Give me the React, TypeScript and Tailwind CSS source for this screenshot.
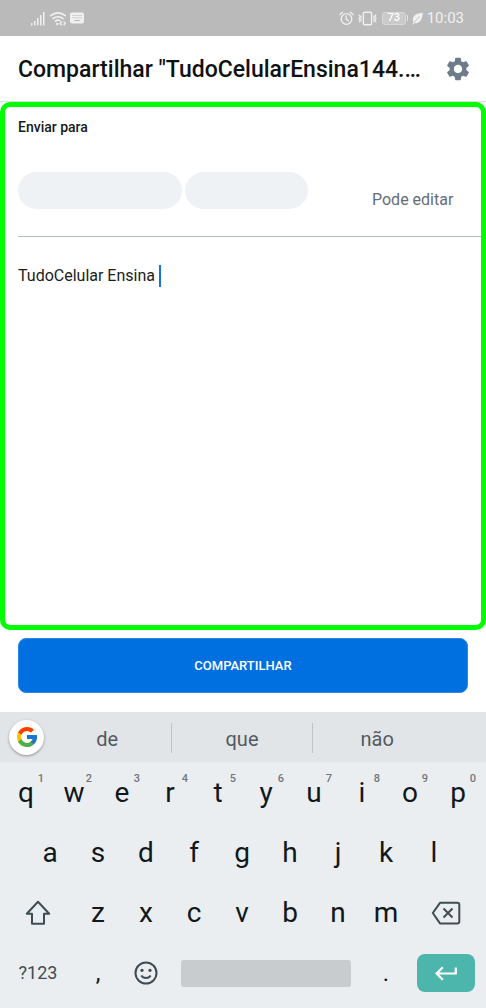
import type { ReactNode } from "react";
import { FcGoogle } from "react-icons/fc";
import { MdSettings } from "react-icons/md";

interface KeyProps {
  label: string;
  hint?: string;
  className?: string;
}

const Key = ({ label, hint, className = "text-[28px]" }: KeyProps) => {
  return (
    <button type="button" className={`relative col-span-2 leading-8 text-[#11181c] ${className}`}>
      {label}
      {hint && (
        <span className="absolute right-1.5 top-2 text-[11px] leading-4 font-medium text-[#70767a]">{hint}</span>
      )}
    </button>
  );
};

interface IconKeyProps {
  label: string;
  className: string;
  children: ReactNode;
}

const IconKey = ({ label, className, children }: IconKeyProps) => {
  return (
    <button type="button" aria-label={label} className={`flex items-center justify-center ${className}`}>
      {children}
    </button>
  );
};

const StatusBar = () => {
  return (
    <div className="flex h-9 items-center justify-between bg-[#bababa] pl-[30px] pr-[22px] text-[#f0f0f0]">
      <div className="flex items-center gap-1">
        <svg width="16" height="15" viewBox="0 0 16 15" fill="currentColor">
          <rect x="1" y="12" width="1.5" height="2.5" />
          <rect x="4" y="10" width="1.5" height="4.5" />
          <rect x="7" y="7" width="1.5" height="7.5" />
          <rect x="10" y="4" width="1.5" height="10.5" />
          <rect x="13" y="1" width="1.5" height="13.5" />
        </svg>
        <svg width="16" height="15" viewBox="0 0 16 15" fill="none" stroke="currentColor" strokeWidth="1.6" strokeLinecap="round">
          <path d="M.8 4.7a10.5 10.5 0 0 1 14.4 0M3 7.7a7.2 7.2 0 0 1 10 0M5.5 10.2a3.8 3.8 0 0 1 4.4-.6" />
          <circle cx="7.3" cy="13" r="1.2" fill="currentColor" stroke="none" />
          <path d="m11.4 11-1.2 1.4 1.2 1.4M14 11l1.2 1.4-1.2 1.4" strokeWidth="1.4" />
        </svg>
        <svg width="14" height="12" viewBox="0 0 14 12">
          <rect width="14" height="11" y=".5" rx="2" fill="currentColor" />
          <path d="M2.5 3.5h9M2.5 5.8h9" stroke="#b0b0b0" strokeWidth="1" strokeDasharray="1 1" />
          <path d="M4.5 8.5h5" stroke="#b0b0b0" strokeWidth="1" />
        </svg>
      </div>
      <div className="flex items-center gap-1">
        <svg width="15" height="15" viewBox="0 0 15 15" fill="none" stroke="currentColor" strokeWidth="1.3" strokeLinecap="round">
          <circle cx="7.5" cy="8" r="5.3" />
          <path d="M7.2 5v3.2l2.3 1.6M.9 3.6 3.6 1.2M14.1 3.6l-2.7-2.4" />
        </svg>
        <svg width="19" height="15" viewBox="0 0 19 15" fill="none" stroke="currentColor" strokeWidth="1.4">
          <rect x="5.4" y="1.2" width="8.2" height="12.6" rx="1.2" />
          <path d="m.9 3.5 1.2 2-1.2 2 1.2 2-1.2 2M3 4.5v6M18.1 3.5l-1.2 2 1.2 2-1.2 2 1.2 2M16 4.5v6" strokeWidth="1.1" />
        </svg>
        <div className="flex items-center gap-px pl-px">
          <span className="flex h-[13px] w-6 items-center justify-center rounded-[3px] border border-[#d8d8d8] bg-[#cacaca] text-[11px] leading-3 font-medium text-white">
            73
          </span>
          <span className="h-1.5 w-px bg-[#e4e4e4]" />
        </div>
        <div className="flex items-center gap-1">
          <svg width="11" height="13" viewBox="0 0 11 13">
            <path d="M10.8.8C6 1 .8 3 .8 7.6c0 1 .2 1.8.7 2.5L.2 12.2l.8.5 1.3-1.8c4.8 1.3 8-2.3 8.5-10.1Z" fill="currentColor" />
            <path d="M2 10.5 7.7 4.3" stroke="#bababa" strokeWidth=".8" />
          </svg>
          <span className="text-[15px] leading-5">10:03</span>
        </div>
      </div>
    </div>
  );
};

const suggestions = ["de", "que", "não"];
const topRow = ["q", "w", "e", "r", "t", "y", "u", "i", "o", "p"];
const homeRow = ["a", "s", "d", "f", "g", "h", "j", "k", "l"];
const bottomRow = ["z", "x", "c", "v", "b", "n", "m"];

const Keyboard = () => {
  return (
    <div className="bg-[#ebeef1]">
      <div className="flex h-[50px] items-center bg-[#e2e5e8] pl-[9px] pr-[45px]">
        <button
          type="button"
          aria-label="Google"
          className="flex size-[35px] shrink-0 items-center justify-center rounded-full bg-white shadow-sm shadow-black/30"
        >
          <FcGoogle size={24} />
        </button>
        <div className="grid h-7 flex-1 grid-cols-[9fr_10fr_9fr] divide-x divide-[#bfc4c8]">
          {suggestions.map((word) => (
            <button key={word} type="button" className="pt-0.5 text-xl leading-7 text-[#535b61]">
              {word}
            </button>
          ))}
        </div>
      </div>
      <div className="grid auto-rows-[60px] grid-cols-20 pl-0.5 pr-1 pt-px pb-[5px]">
        {topRow.map((letter, index) => (
          <Key key={letter} label={letter} hint={String((index + 1) % 10)} />
        ))}
        {homeRow.map((letter, index) => (
          <Key key={letter} label={letter} className={index === 0 ? "col-start-2 text-[28px]" : "text-[28px]"} />
        ))}
        <IconKey label="Shift" className="col-span-3 col-start-1 text-[#404c54]">
          <svg width="26" height="26" viewBox="0 0 26 26" fill="none" stroke="currentColor" strokeWidth="2" strokeLinejoin="round">
            <path d="M13 1.8 1.8 13.7H7v10h12v-10h5.2Z" />
          </svg>
        </IconKey>
        {bottomRow.map((letter) => (
          <Key key={letter} label={letter} />
        ))}
        <IconKey label="Apagar" className="col-span-3 text-[#404c54]">
          <svg width="30" height="24" viewBox="0 0 30 24" fill="none" stroke="currentColor" strokeWidth="2" strokeLinejoin="round">
            <path d="M9 1.8h17.3a2 2 0 0 1 2 2v16.6a2 2 0 0 1-2 2H9L1.8 12Z" />
            <path d="m12.5 7.5 9 9m0-9-9 9" />
          </svg>
        </IconKey>
        <button type="button" className="col-span-3 text-lg leading-6 text-[#404c54]">
          ?123
        </button>
        <Key label="," className="text-2xl" />
        <IconKey label="Emoji" className="col-span-2 text-[#404c54]">
          <svg width="24" height="24" viewBox="0 0 24 24" fill="none" stroke="currentColor" strokeWidth="2">
            <circle cx="12" cy="12" r="10.5" />
            <path d="M7.4 14.5c1.8 3.2 7.4 3.2 9.2 0" />
            <circle cx="8" cy="9.3" r="1.6" fill="currentColor" stroke="none" />
            <circle cx="16" cy="9.3" r="1.6" fill="currentColor" stroke="none" />
          </svg>
        </IconKey>
        <IconKey label="Espaço" className="col-span-8 px-[11px]">
          <span className="h-[27px] w-full rounded-[3px] bg-[#c8ccce]" />
        </IconKey>
        <Key label="." className="text-2xl" />
        <IconKey label="Enter" className="col-span-3 px-[7px] text-white">
          <span className="flex h-[38px] w-full items-center justify-center rounded-lg bg-[#4db6ac]">
            <svg width="24" height="16" viewBox="0 0 24 16" fill="none" stroke="currentColor" strokeWidth="2.2">
              <path d="M21.8 2.5v6H3M8.8 2.2 2.6 8.5l6.2 6.3" />
            </svg>
          </span>
        </IconKey>
      </div>
    </div>
  );
};

const App = () => {
  return (
    <div className="flex min-h-screen flex-col bg-white font-['Roboto',sans-serif]">
      <StatusBar />
      <header className="flex h-[66px] items-center gap-5 border-b border-[#dcdfe3] pl-[18px] pr-[14px]">
        <h1 className="flex-1 truncate pt-0.5 text-[23px] leading-8 font-medium text-[#0f1113]">
          Compartilhar "TudoCelularEnsina144.…
        </h1>
        <button type="button" aria-label="Configurações" className="shrink-0 text-[#6e7b88]">
          <MdSettings size={28} />
        </button>
      </header>

      <main className="flex flex-1 flex-col">
        <section className="flex flex-1 flex-col rounded-[10px] border-[5px] border-[#00ff00] pl-[13px]">
          <h2 className="pt-2.5 text-sm leading-5 font-medium text-[#17191c]">Enviar para</h2>
          <div className="mt-[35px] flex h-[65px] items-start justify-between border-b border-[#b4bcc7] pr-[27px]">
            <div className="flex gap-[3px]">
              <span className="h-[37px] w-[164px] rounded-full bg-[#eef2f5]" />
              <span className="h-[37px] w-[123px] rounded-full bg-[#eef2f5]" />
            </div>
            <select
              aria-label="Permissão"
              className="mt-4 appearance-none bg-transparent text-base leading-6 text-[#666c78]"
            >
              <option>Pode editar</option>
            </select>
          </div>
          <div className="mt-[27px] flex items-center">
            <textarea
              aria-label="Mensagem"
              rows={1}
              defaultValue="TudoCelular Ensina "
              className="field-sizing-content resize-none overflow-hidden text-base leading-6 text-[#1b1d20] outline-none"
            />
            <span className="h-[22px] w-0.5 bg-[#1a6fe0]" />
          </div>
        </section>

        <div className="px-[18px] pt-2 pb-[19px]">
          <button
            type="button"
            className="h-[55px] w-full rounded-lg border border-[#2f85e6] bg-[#0070e0] text-[13px] leading-5 font-medium text-white"
          >
            COMPARTILHAR
          </button>
        </div>
      </main>

      <Keyboard />
    </div>
  );
};

export default App;
